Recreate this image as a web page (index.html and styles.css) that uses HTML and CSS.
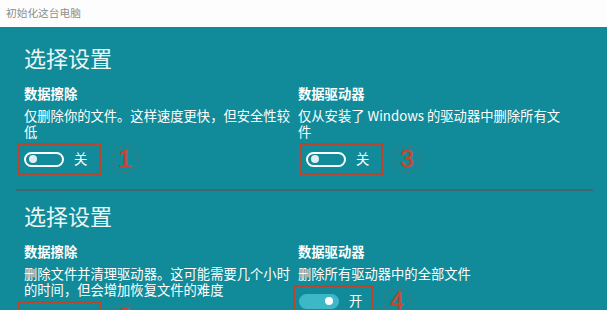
FILE: index.html
```html
<!DOCTYPE html>
<html lang="zh-CN">
<head>
    <meta charset="UTF-8">
    <meta name="viewport" content="width=device-width, initial-scale=1.0">
    <title>初始化这台电脑</title>
    <link rel="stylesheet" href="styles.css">
</head>
<body>
    <header class="titlebar">初始化这台电脑</header>

    <main class="panel">
        <!-- first choice -->
        <section class="settings first">
            <h2>选择设置</h2>
            <div class="columns">
                <div class="option">
                    <h3>数据擦除</h3>
                    <p>仅删除你的文件。这样速度更快，但安全性较低</p>
                    <div class="mark">
                        <div class="switch-box shift-left">
                            <span class="toggle"></span>
                            <span class="state">关</span>
                        </div>
                        <span class="num">1</span>
                    </div>
                </div>
                <div class="option">
                    <h3>数据驱动器</h3>
                    <p>仅从安装了 Windows 的驱动器中删除所有文<br>件</p>
                    <div class="mark">
                        <div class="switch-box shift-right">
                            <span class="toggle"></span>
                            <span class="state">关</span>
                        </div>
                        <span class="num">3</span>
                    </div>
                </div>
            </div>
        </section>

        <!-- second choice -->
        <section class="settings second">
            <h2>选择设置</h2>
            <div class="columns">
                <div class="option">
                    <h3>数据擦除</h3>
                    <p>删除文件并清理驱动器。这可能需要几个小时的时间，但会增加恢复文件的难度</p>
                    <div class="mark">
                        <div class="switch-box shift-left">
                            <span class="toggle on"></span>
                            <span class="state">开</span>
                        </div>
                        <span class="num">2</span>
                    </div>
                </div>
                <div class="option">
                    <h3>数据驱动器</h3>
                    <p>删除所有驱动器中的全部文件</p>
                    <div class="mark">
                        <div class="switch-box shift-back">
                            <span class="toggle on"></span>
                            <span class="state">开</span>
                        </div>
                        <span class="num">4</span>
                    </div>
                </div>
            </div>
        </section>
    </main>
</body>
</html>
```

FILE: styles.css
```css
body {
    margin: 0;
    padding: 0;
    width: 607px;
    height: 310px;
    overflow: hidden;
    font-family: "Noto Sans CJK SC", "Noto Sans", sans-serif;
    background-color: #118b99;
}

.titlebar {
    height: 27px;
    line-height: 26px;
    padding-left: 6px;
    font-size: 10.7px;
    color: #8c8c8c;
    background-color: #fdfdfd;
    box-sizing: border-box;
}

.panel {
    color: #ffffff;
}

.settings {
    margin: 0 14px 0 16px;
    padding-left: 8px;
}

.settings.first {
    padding-top: 15px;
    padding-bottom: 14px;
    border-bottom: 2px solid #43676f;
}

.settings.second {
    padding-top: 9px;
}

.settings h2 {
    margin: 0;
    font-size: 22px;
    line-height: 30px;
    font-weight: 400;
    color: #eaf7f7;
}

.columns {
    display: grid;
    grid-template-columns: 274px 280px;
    margin-top: 12px;
}

.option h3 {
    margin: 0;
    font-size: 13.3px;
    line-height: 20px;
    font-weight: 700;
}

.option p {
    margin: 4px 0 0;
    font-size: 13.3px;
    line-height: 16px;
}

.mark {
    display: flex;
    align-items: center;
    margin-top: 3px;
}

.switch-box {
    display: flex;
    align-items: center;
    gap: 10px;
    width: 83px;
    height: 32px;
    padding-left: 4px;
    border: 2px solid #b9452f;
    box-sizing: border-box;
}

.shift-left {
    margin-left: -6px;
}

.shift-right {
    margin-left: 2px;
}

.shift-back {
    margin-left: -5px;
    width: 80px;
}

.toggle {
    position: relative;
    width: 40px;
    height: 15px;
    border: 2px solid #ffffff;
    border-radius: 8px;
    box-sizing: border-box;
}

.toggle::after {
    content: "";
    position: absolute;
    top: 1.5px;
    left: 3px;
    width: 8px;
    height: 8px;
    border-radius: 50%;
    background-color: #e3ecee;
}

.toggle.on {
    border-color: #3cb8c6;
    background-color: #3cb8c6;
}

.toggle.on::after {
    left: auto;
    right: 4px;
    background-color: #ffffff;
}

.state {
    font-size: 13.3px;
    line-height: 16px;
}

.num {
    width: 26px;
    height: 26px;
    margin-left: 10px;
    border: 1px solid rgba(196, 70, 45, 0.3);
    border-radius: 50%;
    font-family: "Liberation Sans", sans-serif;
    font-size: 24px;
    line-height: 26px;
    text-align: center;
    color: #c6472d;
    -webkit-text-stroke: 0.6px #c6472d;
}
```
